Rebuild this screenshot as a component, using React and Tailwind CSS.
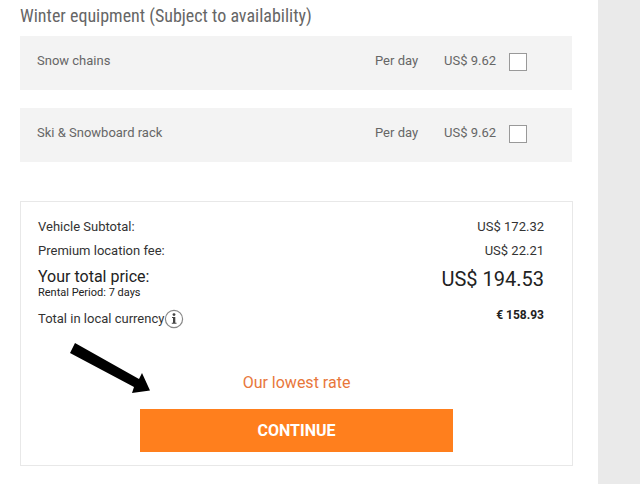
import React from 'react'

const equipment = [
  { id: 'snow-chains', name: 'Snow chains', price: 'US$ 9.62' },
  { id: 'ski-rack', name: 'Ski & Snowboard rack', price: 'US$ 9.62' },
]

function EquipmentRow({ item }) {
  return (
    <li className="flex items-start h-[54px] pl-[17px] pr-[45px] pt-4 bg-[#f3f3f3] text-[13px] leading-[18px] text-[#666]">
      <label htmlFor={item.id} className="flex-1">{item.name}</label>
      <span className="w-[69px]">Per day</span>
      <span className="w-[65px]">{item.price}</span>
      <input
        id={item.id}
        type="checkbox"
        className="appearance-none w-[18px] h-[18px] mt-px bg-white border border-[#999] checked:bg-[#ff7f1d]"
      />
    </li>
  )
}

function InfoIcon() {
  return (
    <svg viewBox="0 0 20 20" className="w-5 h-5" fill="none" aria-hidden="true">
      <circle cx="10" cy="10" r="8.6" stroke="#888" strokeWidth="1.2" />
      <circle cx="10" cy="5.6" r="1.4" fill="#444" />
      <path d="M8 8h3.3v5.8h1.2v1H7.8v-1H9V9H8z" fill="#444" />
    </svg>
  )
}

function PriceSummary() {
  return (
    <section className="relative mt-[39px] -mr-px border border-[#e8e8e8] py-[13px] text-[13px] text-[#333]">
      <dl className="pl-[17px] pr-7">
        <div className="flex justify-between leading-6">
          <dt>Vehicle Subtotal:</dt>
          <dd>US$ 172.32</dd>
        </div>
        <div className="flex justify-between leading-6">
          <dt>Premium location fee:</dt>
          <dd>US$ 22.21</dd>
        </div>
        <div className="flex justify-between items-start mt-1 text-[#222]">
          <dt>
            <span className="block text-base leading-5">Your total price:</span>
            <span className="block text-[11px] leading-3">Rental Period: 7 days</span>
          </dt>
          <dd className="text-xl leading-6">US$ 194.53</dd>
        </div>
        <div className="flex justify-between items-start mt-2">
          <dt className="flex items-center leading-6">
            Total in local currency
            <button type="button" aria-label="About local currency">
              <InfoIcon />
            </button>
          </dt>
          <dd className="text-xs leading-4 font-bold text-[#222]">€ 158.93</dd>
        </div>
      </dl>

      <p className="mt-10 text-center text-base leading-6 text-[#e8773b]">Our lowest rate</p>
      <button type="button" className="block w-[313px] h-[43px] mx-auto mt-[14px] bg-[#ff7f1d] text-base font-bold text-white">
        CONTINUE
      </button>

      {/* Pointer to the continue button */}
      <svg viewBox="0 0 80 50" className="absolute left-[49px] top-[141px] w-20 h-[50px]" aria-hidden="true">
        <polygon points="0,10 5,0 69,36 72,30 80,47.5 62,50 64,44" fill="#000" />
      </svg>
    </section>
  )
}

export default function App() {
  return (
    <div className="flex min-h-screen bg-white font-['Roboto',sans-serif]">
      <main className="flex-1 pl-5 pr-[26px] pt-1 pb-[17px]">
        <h2 className="font-['Roboto_Condensed','Roboto',sans-serif] text-lg leading-6 text-[#666]">
          Winter equipment (Subject to availability)
        </h2>
        <ul className="mt-2 flex flex-col gap-[18px]">
          {equipment.map(item => (
            <EquipmentRow key={item.id} item={item} />
          ))}
        </ul>
        <PriceSummary />
      </main>
      <aside className="w-[42px] bg-[#eaeaea]" />
    </div>
  )
}
